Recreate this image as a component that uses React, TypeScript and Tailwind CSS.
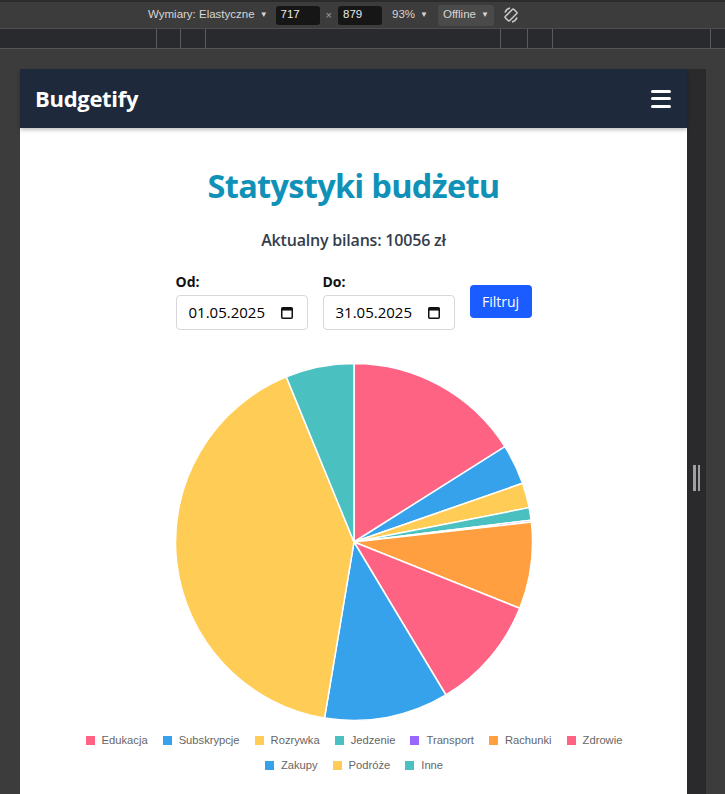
import React from "react";

type Slice = { label: string; color: string; from: number; to: number };

const slices: Slice[] = [
  { label: "Edukacja", color: "#ff6384", from: 0, to: 57.7 },
  { label: "Subskrypcje", color: "#36a2eb", from: 57.7, to: 70.8 },
  { label: "Rozrywka", color: "#ffcd56", from: 70.8, to: 78.9 },
  { label: "Jedzenie", color: "#4bc0c0", from: 78.9, to: 83.0 },
  { label: "Transport", color: "#9966ff", from: 83.0, to: 83.6 },
  { label: "Rachunki", color: "#ff9f40", from: 83.6, to: 111.8 },
  { label: "Zdrowie", color: "#ff6384", from: 111.8, to: 149.0 },
  { label: "Zakupy", color: "#36a2eb", from: 149.0, to: 189.5 },
  { label: "Podróże", color: "#ffcd56", from: 189.5, to: 337.7 },
  { label: "Inne", color: "#4bc0c0", from: 337.7, to: 360 },
];

function slicePath(a0: number, a1: number, cx = 180, cy = 180, r = 178.5) {
  const rad = (d: number) => (d * Math.PI) / 180;
  const x0 = cx + r * Math.sin(rad(a0));
  const y0 = cy - r * Math.cos(rad(a0));
  const x1 = cx + r * Math.sin(rad(a1));
  const y1 = cy - r * Math.cos(rad(a1));
  const large = a1 - a0 > 180 ? 1 : 0;
  return `M${cx},${cy} L${x0},${y0} A${r},${r} 0 ${large} 1 ${x1},${y1} Z`;
}

function DevToolbar() {
  return (
    <div className="h-[29px] shrink-0 bg-[#3c3c3c] border-t-[2px] border-[#2b2b2b] border-b border-b-[#4d4d4d] flex items-center text-[11.5px] text-[#d6d6d6] font-['Liberation_Sans',sans-serif]">
      <span className="ml-[148px]">Wymiary: Elastyczne</span>
      <span className="ml-[5px] text-[8px]">▼</span>
      <div className="ml-[8px] w-[44px] h-[19px] bg-[#161616] rounded-[3px] pl-[5px] flex items-center text-[#e8e8e8]">717</div>
      <span className="mx-[6px] text-[11px] text-[#a0a0a0]">×</span>
      <div className="w-[44px] h-[19px] bg-[#161616] rounded-[3px] pl-[5px] flex items-center text-[#e8e8e8]">879</div>
      <span className="ml-[10px]">93%</span>
      <span className="ml-[5px] text-[8px]">▼</span>
      <div className="ml-[10px] h-[21px] px-[5px] bg-[#4a4a4a] rounded-[3px] flex items-center gap-[5px]">
        Offline <span className="text-[8px]">▼</span>
      </div>
      <svg className="ml-[8px]" width="18" height="18" viewBox="0 0 18 18" fill="none" stroke="#c8c8c8" strokeWidth="1.6">
        <rect x="6" y="3" width="6" height="12" rx="1.2" transform="rotate(45 9 9)" />
        <path d="M3 6.5 A7 7 0 0 1 8 2" />
        <path d="M15 11.5 A7 7 0 0 1 10 16" />
      </svg>
    </div>
  );
}

function Ruler() {
  const marks = [156, 180, 205, 500, 527, 552, 710];
  return (
    <div className="h-[20px] shrink-0 bg-[#292a2d] border-b border-[#555] flex">
      {marks.map((m, i) => (
        <div key={m} className="h-full border-l border-[#5a5a5a]" style={{ marginLeft: i === 0 ? m : m - marks[i - 1] - 1 }} />
      ))}
    </div>
  );
}

function DateField({ label, value }: { label: string; value: string }) {
  return (
    <div className="flex flex-col">
      <span className="text-[14px] font-bold text-[#111] leading-[17px] mb-[5px]">{label}</span>
      <div className="w-[132px] h-[35px] border border-[#d6d6dc] rounded-[4px] flex items-center justify-between pl-[12px] pr-[14px] text-[15px] text-black">
        <span>{value}</span>
        <svg width="12" height="13" viewBox="0 0 12 13" fill="none">
          <rect x="0.75" y="1.75" width="10.5" height="10.5" rx="1" stroke="#111" strokeWidth="1.5" />
          <rect x="0.75" y="1.75" width="10.5" height="2.8" fill="#111" />
        </svg>
      </div>
    </div>
  );
}

function Page() {
  return (
    <div className="w-[667px] bg-white flex flex-col font-['Open_Sans','Noto_Sans',sans-serif]">
      <header className="h-[59px] shrink-0 bg-[#1e293b] flex items-center justify-between pl-[15px] pr-[16px] shadow-[0_2px_4px_rgba(0,0,0,0.25)] z-10">
        <span className="text-white font-bold text-[22px] tracking-[-0.3px]">Budgetify</span>
        <div className="flex flex-col gap-[4.5px]">
          <div className="w-[20px] h-[3px] rounded-full bg-white" />
          <div className="w-[20px] h-[3px] rounded-full bg-white" />
          <div className="w-[20px] h-[3px] rounded-full bg-white" />
        </div>
      </header>
      <main className="flex flex-col items-center pt-[36px] shrink-0">
        <h1 className="text-[32.5px] leading-[44px] font-bold text-[#0f91b8] tracking-[-0.7px]">Statystyki budżetu</h1>
        <p className="mt-[20px] text-[16px] font-semibold text-[#343d4c] tracking-[-0.2px]">Aktualny bilans: 10056 zł</p>
        <div className="mt-[21px] flex items-center gap-[15px]">
          <DateField label="Od:" value="01.05.2025" />
          <DateField label="Do:" value="31.05.2025" />
          <button className="w-[62px] h-[33px] bg-[#1a5cff] rounded-[4px] text-white text-[14px] font-medium">Filtruj</button>
        </div>
        <svg className="mt-[32px]" width="360" height="360" viewBox="0 0 360 360">
          {slices.map((s) => (
            <path key={s.label + s.from} d={slicePath(s.from, s.to)} fill={s.color} stroke="#fff" strokeWidth="1.5" strokeLinejoin="round" />
          ))}
        </svg>
        <div className="mt-[12px] w-[580px] flex flex-wrap justify-center gap-y-[13px] font-['Liberation_Sans',sans-serif] text-[11.2px] text-[#666]">
          {slices.map((s) => (
            <div key={s.label} className="flex items-center mx-[7px] leading-[12px]">
              <span className="w-[11px] h-[11px] border border-white" style={{ backgroundColor: s.color }} />
              <span className="ml-[6px]">{s.label}</span>
            </div>
          ))}
        </div>
        <div className="h-[40px]" />
      </main>
    </div>
  );
}

export default function App() {
  return (
    <div className="w-[725px] h-[794px] overflow-hidden bg-[#3c3c3c] flex flex-col">
      <DevToolbar />
      <Ruler />
      <div className="flex flex-1 min-h-0 pt-[20px] pl-[20px]">
        <Page />
        <div className="w-[19px] bg-[#2a2a2c] flex flex-col items-center">
          <div className="mt-[396px] flex gap-[2px]">
            <div className="w-[2.5px] h-[26px] bg-[#a0a0a0]" />
            <div className="w-[2.5px] h-[26px] bg-[#a0a0a0]" />
          </div>
        </div>
      </div>
    </div>
  );
}
